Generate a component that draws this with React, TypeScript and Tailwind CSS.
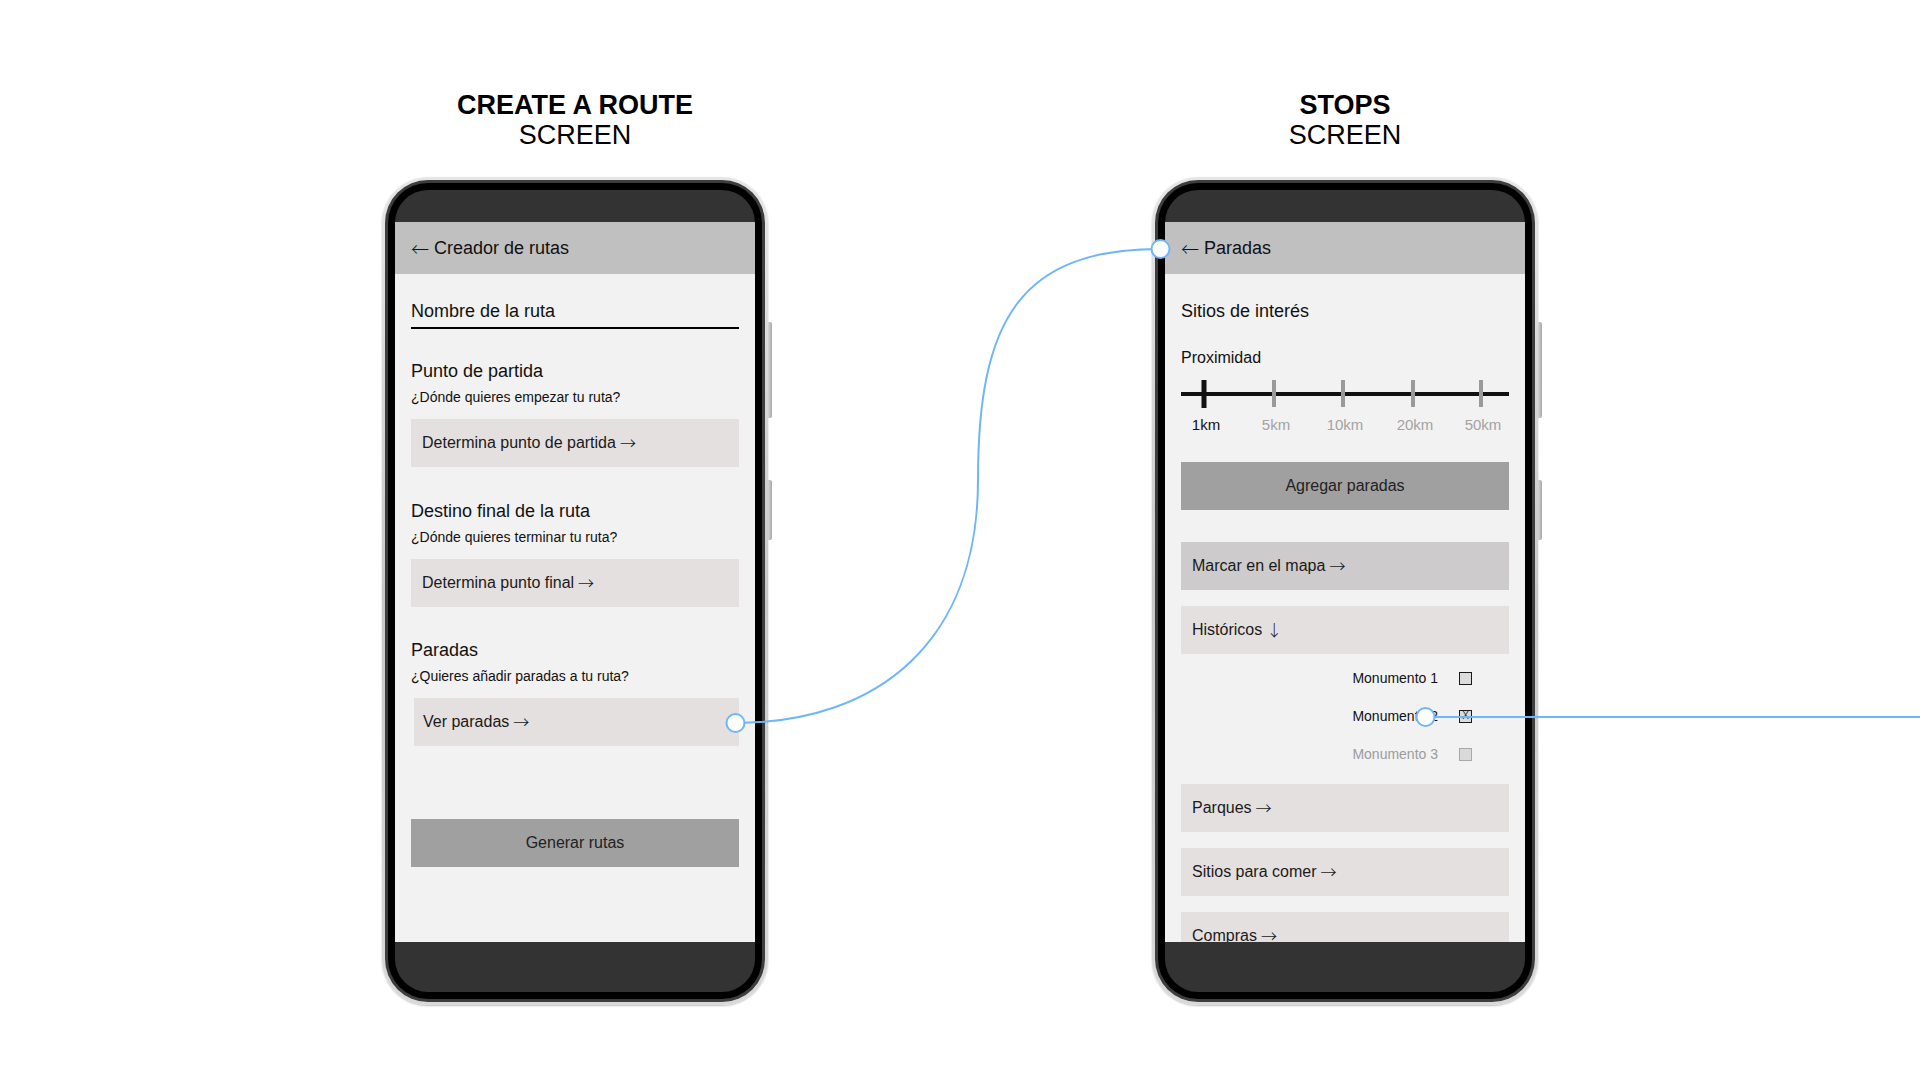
import React from "react";

type PhoneProps = { title: string; children: React.ReactNode };

// Arrow glyphs come from a CJK face, whose arrows are long and thin.
function Arrow({ char }: { char: string }) {
  return <span className="font-['Noto_Sans_CJK_JP',sans-serif] font-light">{char}</span>;
}

function Phone({ title, children }: PhoneProps) {
  return (
    <div className="relative h-[828px] w-[386px] rounded-[46px] bg-linear-to-b from-[#e6e6e6] via-[#c8c8c8] to-[#d9d9d9] p-[3px] shadow-[0_1px_2px_rgba(0,0,0,0.25)]">
      {/* side keys */}
      <div className="absolute right-[-4px] top-[145px] h-[96px] w-[4px] rounded-r-[2px] bg-linear-to-r from-[#d4d4d4] to-[#a8a8a8]" />
      <div className="absolute right-[-4px] top-[303px] h-[60px] w-[4px] rounded-r-[2px] bg-linear-to-r from-[#d4d4d4] to-[#a8a8a8]" />
      <div className="h-full w-full rounded-[43px] bg-[#3d3d3d] p-[3px]">
        <div className="h-full w-full rounded-[40px] bg-black p-[7px]">
          <div className="flex h-full w-full flex-col overflow-hidden rounded-[33px] bg-[#333333]">
            <div className="h-[32px] shrink-0" />
            <div className="flex h-[52px] shrink-0 items-center bg-[#c0c0c0] px-4 text-[18px] leading-[24px] text-[#111]">
              <Arrow char="←" />
              <span className="ml-[5px]">{title}</span>
            </div>
            <div className="h-[668px] shrink-0 overflow-hidden bg-[#f2f2f2] px-4">{children}</div>
          </div>
        </div>
      </div>
    </div>
  );
}

function Heading({ bold, plain }: { bold: string; plain: string }) {
  return (
    <div className="flex flex-col items-center text-[27px] leading-[30px] text-black">
      <div className="font-bold">{bold}</div>
      <div>{plain}</div>
    </div>
  );
}

function NavButton({
  label,
  arrow = "→",
  className = "",
}: {
  label: string;
  arrow?: string;
  className?: string;
}) {
  return (
    <div className={`flex h-[48px] items-center bg-[#e5e0e0] pl-[11px] text-[16px] leading-[24px] text-[#1a1a1a] ${className}`}>
      <span>{label}</span>
      <span className="ml-[4px]">
        <Arrow char={arrow} />
      </span>
    </div>
  );
}

function Section({
  title,
  question,
  action,
  mt,
  buttonClass = "",
}: {
  title: string;
  question: string;
  action: string;
  mt: string;
  buttonClass?: string;
}) {
  return (
    <div className={mt}>
      <div className="text-[18px] leading-[24px] text-[#111]">{title}</div>
      <div className="mt-[4px] text-[14px] leading-[20px] text-[#111]">{question}</div>
      <NavButton label={action} className={`mt-[12px] ${buttonClass}`} />
    </div>
  );
}

function CreateRoute() {
  return (
    <div className="pt-[25px]">
      <div className="border-b-2 border-black pb-[4px] text-[18px] leading-[24px] text-[#111]">Nombre de la ruta</div>
      <Section
        mt="mt-[30px]"
        title="Punto de partida"
        question="¿Dónde quieres empezar tu ruta?"
        action="Determina punto de partida"
      />
      <Section
        mt="mt-[32px]"
        title="Destino final de la ruta"
        question="¿Dónde quieres terminar tu ruta?"
        action="Determina punto final"
      />
      <Section
        mt="mt-[31px]"
        title="Paradas"
        question="¿Quieres añadir paradas a tu ruta?"
        action="Ver paradas"
        buttonClass="ml-[3px] !pl-[9px]"
      />
      <div className="mt-[73px] flex h-[48px] items-center justify-center bg-[#a0a0a0] text-[16px] leading-[24px] text-[#222]">
        Generar rutas
      </div>
    </div>
  );
}

const stops = [
  { label: "1km", tick: 23, active: true },
  { label: "5km", tick: 93, active: false },
  { label: "10km", tick: 162, active: false },
  { label: "20km", tick: 232, active: false },
  { label: "50km", tick: 300, active: false },
];

function ProximitySlider() {
  return (
    <div>
      <div className="relative mt-[11px] h-[28px]">
        <div className="absolute left-0 right-0 top-[12px] h-[4px] bg-[#111]" />
        {stops.map((s) =>
          s.active ? (
            <div key={s.label} className="absolute top-0 h-[28px] w-[5px] -translate-x-1/2 bg-[#111]" style={{ left: s.tick }} />
          ) : (
            <div key={s.label} className="absolute top-0 h-[27px] w-[4px] -translate-x-1/2 bg-[#9a9a9a]" style={{ left: s.tick }} />
          )
        )}
      </div>
      <div className="relative mt-[7px] h-[20px] text-[15px] leading-[20px]">
        {stops.map((s) => (
          <div
            key={s.label}
            className={`absolute top-0 w-[60px] -translate-x-1/2 text-center ${s.active ? "text-[#111]" : "text-[#a3a3a3]"}`}
            style={{ left: s.tick + 2 }}
          >
            {s.label}
          </div>
        ))}
      </div>
    </div>
  );
}

function CheckRow({ label, state }: { label: string; state: "off" | "on" | "disabled" }) {
  const box =
    state === "disabled"
      ? "border-[#a8a8a8] bg-[#dadada]"
      : "border-[#1a1a1a] bg-[#dcdcdc]";
  return (
    <div className="flex h-[20px] items-center justify-end gap-[21px] pr-[37px] text-[14px] leading-[20px]">
      <span className={state === "disabled" ? "text-[#9c9c9c]" : "text-[#111]"}>{label}</span>
      <span className={`flex h-[13px] w-[13px] items-center justify-center border-[1.5px] text-[10px] leading-none text-[#333] ${box}`}>
        {state === "on" ? "X" : ""}
      </span>
    </div>
  );
}

function Stops() {
  return (
    <div className="pt-[25px]">
      <div className="text-[18px] leading-[24px] text-[#111]">Sitios de interés</div>
      <div className="mt-[24px] text-[16px] leading-[22px] text-[#111]">Proximidad</div>
      <ProximitySlider />
      <div className="mt-[27px] flex h-[48px] items-center justify-center bg-[#a0a0a0] text-[16px] leading-[24px] text-[#222]">
        Agregar paradas
      </div>
      <NavButton label="Marcar en el mapa" className="mt-[32px] !bg-[#cdcbcb]" />
      <NavButton label="Históricos" arrow="↓" className="mt-[16px]" />
      <div className="mt-[14px] flex flex-col gap-[18px]">
        <CheckRow label="Monumento 1" state="off" />
        <CheckRow label="Monumento 2" state="on" />
        <CheckRow label="Monumento 3" state="disabled" />
      </div>
      <NavButton label="Parques" className="mt-[20px]" />
      <NavButton label="Sitios para comer" className="mt-[16px]" />
      <NavButton label="Compras" className="mt-[16px]" />
    </div>
  );
}

function Connectors() {
  const blue = "#6fb5f8";
  return (
    <svg
      className="pointer-events-none absolute left-0 top-0"
      width="1920"
      height="1080"
      viewBox="0 0 1920 1080"
      fill="none"
    >
      <path d="M735 723 C880 723 978 640 978 480 C978 320 1020 249 1160 249" stroke={blue} strokeWidth="2" />
      <path d="M1425 717 L1920 717" stroke={blue} strokeWidth="2" />
      <circle cx="735.5" cy="723" r="9" fill="#ffffff" stroke={blue} strokeWidth="2" />
      <circle cx="1160.5" cy="249" r="9" fill="#ffffff" stroke={blue} strokeWidth="2" />
      <circle cx="1425.5" cy="717" r="9" fill="#ffffff" stroke={blue} strokeWidth="2" />
    </svg>
  );
}

export default function App() {
  return (
    <div className="relative h-[1080px] w-[1920px] overflow-hidden bg-white font-['Liberation_Sans',Arial,sans-serif]">
      <div className="flex justify-center gap-[384px] pt-[90px]">
        <div className="flex flex-col items-center">
          <Heading bold="CREATE A ROUTE" plain="SCREEN" />
          <div className="mt-[27px]">
            <Phone title="Creador de rutas">
              <CreateRoute />
            </Phone>
          </div>
        </div>
        <div className="flex flex-col items-center">
          <Heading bold="STOPS" plain="SCREEN" />
          <div className="mt-[27px]">
            <Phone title="Paradas">
              <Stops />
            </Phone>
          </div>
        </div>
      </div>
      <Connectors />
    </div>
  );
}
